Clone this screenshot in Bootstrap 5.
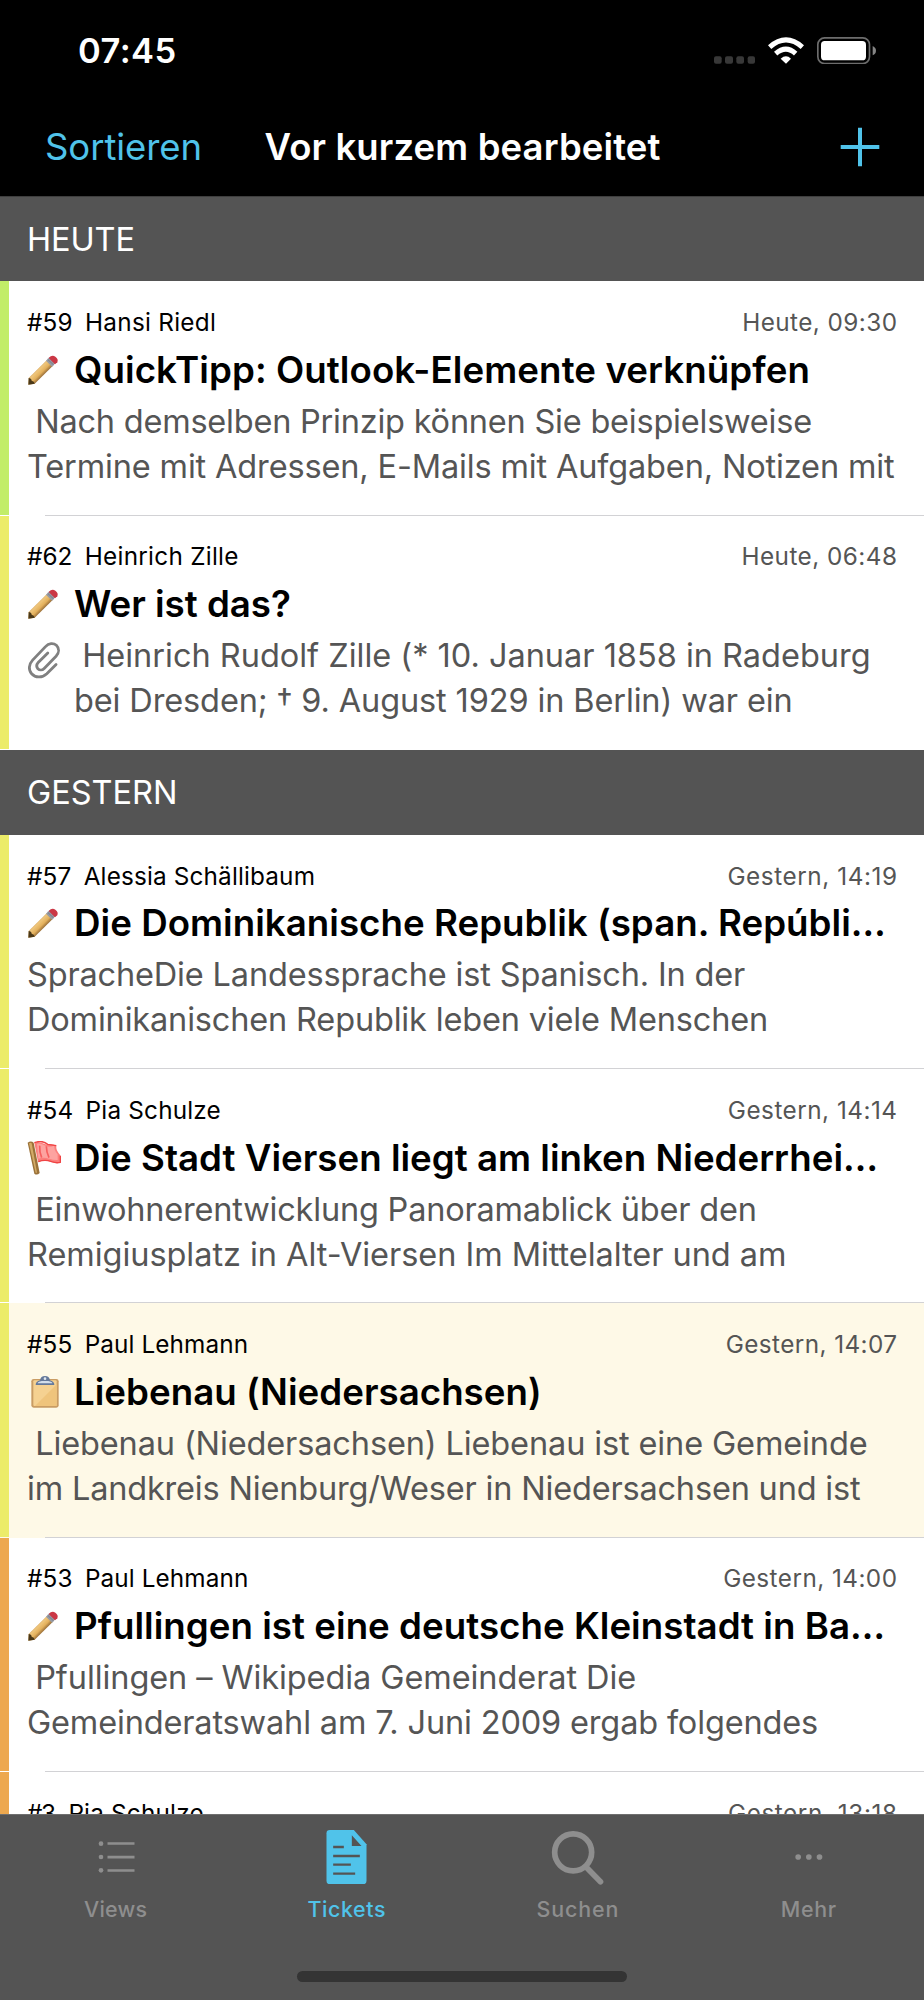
<!DOCTYPE html>
<html lang="de">
<head>
<meta charset="utf-8">
<meta name="viewport" content="width=device-width, initial-scale=1">
<title>Vor kurzem bearbeitet</title>
<link href="https://cdn.jsdelivr.net/npm/bootstrap@5.3.0/dist/css/bootstrap.min.css" rel="stylesheet">
<style>
  :root { --accent: #50c3ea; --bar: #545454; --muted: #8e8e8e; }
  body { font-family: Inter, "Liberation Sans", sans-serif; background: #fff; color: #000; }
  .phone { width: 924px; height: 2000px; }
  .phone > header, .phone > footer { flex: none; }
  .ticket-list { flex: 1 1 0; min-height: 0; }
  [data-w] { white-space: pre; display: inline-block; }
  .statusbar { height: 98px; padding: 26px 48px 0 78px; }
  .clock { font-size: 34.5px; line-height: 50px; font-weight: 600; }
  .statusicons { width: 162px; height: 27.4px; margin-top: 10.7px; }
  .topnav { height: 99px; padding: 0 44px 0 45px; border-bottom: 1px solid #3e3e3e; }
  .topnav .sort { font-size: 36.5px; line-height: 98px; color: var(--accent); }
  .topnav .heading { font-size: 36.5px; line-height: 98px; font-weight: 600; margin-left: 62.5px; }
  .group-head { height: 85px; background: var(--bar); color: #fff; font-size: 32.5px; line-height: 85px; padding-left: 27px; }
  section:first-child .group-head { height: 84.3px; }
  .ticket { height: 234.3px; position: relative; }
  .stripe { width: 9px; margin-bottom: 1px; }
  .ticket::after { content: ""; position: absolute; left: 45px; right: 0; bottom: 0; height: 1px; background: #d2d2d5; }
  .ticket.final::after { display: none; }
  .green { background: #c2ed68; } .yellow { background: #ecec69; } .orange { background: #eda84f; }
  .unread { background: #fef9e7; }
  .content { padding: 25.7px 27px 0 18px; min-width: 0; }
  .meta { font-size: 24.3px; line-height: 30px; }
  .meta .who { margin-left: 12.4px; }
  .when, .desc { color: #555; }
  .subject { font-size: 36.7px; line-height: 60px; font-weight: 600; margin-top: 2.8px; }
  .glyph { width: 47px; flex: none; }
  .glyph svg { display: block; }
  .desc { font-size: 32.5px; line-height: 45px; margin-top: -1.1px; }
  .indent { padding-left: 8.2px; }
  .tabbar { height: 185.7px; background: var(--bar); border-top: 1px solid #6f6f6f; padding-top: 9.7px; }
  .tab { color: var(--muted); font-size: 21.4px; font-weight: 500; }
  .tab.active { color: var(--accent); }
  .tab svg { width: 80px; height: 60px; display: block; }
  .tab span { line-height: 28px; margin-top: 9.6px; }
  .home { width: 330px; height: 11px; border-radius: 6px; background: #343434; margin-bottom: 18px; }
</style>
</head>
<body>
<svg width="0" height="0" class="position-absolute">
  <defs>
    <linearGradient id="wood" gradientUnits="userSpaceOnUse" x1="29" y1="41" x2="53" y2="65"><stop offset="0" stop-color="#c08a45"/><stop offset=".25" stop-color="#efc67c"/><stop offset=".6" stop-color="#e3b05c"/><stop offset="1" stop-color="#7d552a"/></linearGradient>
    <symbol id="pencil" viewBox="0 0 96 96">
      <path d="M4 92 5 72 59 19 77 36 23 89Z" fill="url(#wood)"/>
      <path d="M4 92 5 72q8 0 9 8 8 1 9 9Z" fill="#4a3818"/>
      <path d="M57 20 67 10 85 28 75 38Z" fill="#969aa4"/>
      <path d="M62 16 80 33" stroke="#74777f" stroke-width="2.500"/>
      <path d="M65 12q10-11 20-4t6 17l-7 6Z" fill="#cb3745"/>
    </symbol>
    <symbol id="flag" viewBox="0 0 102 102">
      <path d="M22 5C40-3 48 12 68 10q12-2 20 5-2 12 12 28v22q-14 4-30-3-18-6-37 1Z" fill="#fb7f7c"/>
      <path d="M30 8q10-3 22 5t30 1q-1 14 10 26v17q-12 1-25-4-17-6-33 0Z" fill="#fda3a0"/>
      <path d="M38 14q-1 18 6 36M58 16q0 16 8 34" stroke="#f65f5f" stroke-width="5" fill="none"/>
      <path d="M22 5q24-9 40 5l26 4M34 62q20-8 40 0 14 5 26 2V44" stroke="#ef4344" stroke-width="4" fill="none"/>
      <path d="M2 5q10-7 18 0L38 96q-8 8-16 2Z" fill="#9b7239"/>
      <path d="M6 7q4-4 8 0l16 88h-4Z" fill="#d3ab68"/>
    </symbol>
    <symbol id="clipboard" viewBox="0 0 84 96">
      <rect x="1" y="9" width="82" height="86" rx="7" fill="#c99c63"/>
      <rect x="7" y="13" width="70" height="77" rx="3" fill="#f5d191"/>
      <path d="M77 25v65H12Z" fill="#efc47c"/>
      <path d="M14 27q0-11 13-14Q29 0 42 0t15 13q13 3 13 14Z" fill="#65799a"/>
      <path d="M20 22q0-5 12-7h20q12 2 12 7Z" fill="#d3deeb"/>
      <circle cx="42" cy="8" r="4" fill="#dfe7ef"/>
    </symbol>
    <symbol id="clip" viewBox="83 392 103 115">
      <path d="M171 463 143 491C128 505 108 503 97 491 87 480 88 463 100 450L139 409C149 398 163 397 172 405 181 414 181 427 171 438L135 475C129 481 121 481 116 476 111 470 112 463 117 457L146 428" fill="none" stroke="#808080" stroke-width="8.500" stroke-linecap="round"/>
    </symbol>
  </defs>
</svg>

<div class="phone d-flex flex-column overflow-hidden">
  <header class="bg-black text-white">
    <div class="statusbar d-flex justify-content-between align-items-start">
      <span class="clock" data-w="95.500">07:45</span>
      <svg class="statusicons" viewBox="42 50 486 82">
        <g fill="#383838"><rect x="42" y="108" width="23" height="22" rx="6"/><rect x="75" y="108" width="24" height="22" rx="6"/><rect x="109" y="108" width="23" height="22" rx="6"/><rect x="143" y="108" width="22" height="22" rx="6"/></g>
        <g fill="none" stroke="#fff" stroke-width="15"><path d="M209 80Q258 37 307 80"/><path d="M227 100Q258 73 287 100"/></g>
        <path d="M242 115q16-14 31 0l-15 15Z" fill="#fff"/>
        <rect x="353.500" y="52.500" width="155" height="77" rx="20" fill="none" stroke="#6d6d6d" stroke-width="5"/>
        <rect x="363" y="62" width="135" height="58" rx="11" fill="#fff"/>
        <path d="M518 77q10 5 10 14t-10 14Z" fill="#858585"/>
      </svg>
    </div>
    <nav class="topnav d-flex align-items-center">
      <span class="sort" data-w="152.500">Sortieren</span>
      <span class="heading" data-w="396">Vor kurzem bearbeitet</span>
      <svg class="ms-auto" width="40" height="40" viewBox="0 0 40 40" stroke="#50c3ea" stroke-width="4"><path d="M20 .7v38.600M.7 20h38.600"/></svg>
    </nav>
  </header>

  <main class="ticket-list overflow-hidden">
    <section>
      <div class="group-head"><span data-w="104.500">HEUTE</span></div>
      <article class="ticket d-flex">
        <div class="stripe green"></div>
        <div class="content flex-fill">
          <div class="meta d-flex"><span data-w="44.500">#59</span><span class="who" data-w="127">Hansi Riedl</span><span class="when ms-auto" data-w="151.500">Heute, 09:30</span></div>
          <div class="subject d-flex align-items-center"><span class="glyph"><svg width="32" height="32"><use href="#pencil"/></svg></span><span data-w="732.500">QuickTipp: Outlook-Elemente verknüpfen</span></div>
          <div class="desc"><div class="indent"><span data-w="774">Nach demselben Prinzip können Sie beispielsweise</span></div><div><span data-w="866">Termine mit Adressen, E-Mails mit Aufgaben, Notizen mit</span></div></div>
        </div>
      </article>
      <article class="ticket final d-flex">
        <div class="stripe yellow"></div>
        <div class="content flex-fill">
          <div class="meta d-flex"><span data-w="44.500">#62</span><span class="who" data-w="150.500">Heinrich Zille</span><span class="when ms-auto" data-w="152.500">Heute, 06:48</span></div>
          <div class="subject d-flex align-items-center"><span class="glyph"><svg width="32" height="32"><use href="#pencil"/></svg></span><span data-w="216">Wer ist das?</span></div>
          <div class="desc d-flex"><span class="glyph pt-2"><svg width="34" height="38"><use href="#clip"/></svg></span><div><div class="indent"><span data-w="784.500">Heinrich Rudolf Zille (* 10. Januar 1858 in Radeburg</span></div><div><span data-w="714.500">bei Dresden; † 9. August 1929 in Berlin) war ein</span></div></div></div>
        </div>
      </article>
    </section>
    <section>
      <div class="group-head"><span data-w="147">GESTERN</span></div>
      <article class="ticket d-flex">
        <div class="stripe yellow"></div>
        <div class="content flex-fill">
          <div class="meta d-flex"><span data-w="43.500">#57</span><span class="who" data-w="230">Alessia Schällibaum</span><span class="when ms-auto" data-w="167.500">Gestern, 14:19</span></div>
          <div class="subject d-flex align-items-center"><span class="glyph"><svg width="32" height="32"><use href="#pencil"/></svg></span><span data-w="808.500">Die Dominikanische Republik (span. Repúbli…</span></div>
          <div class="desc"><div><span data-w="717">SpracheDie Landessprache ist Spanisch. In der</span></div><div><span data-w="737">Dominikanischen Republik leben viele Menschen</span></div></div>
        </div>
      </article>
      <article class="ticket d-flex">
        <div class="stripe yellow"></div>
        <div class="content flex-fill">
          <div class="meta d-flex"><span data-w="45.500">#54</span><span class="who" data-w="132">Pia Schulze</span><span class="when ms-auto" data-w="167.500">Gestern, 14:14</span></div>
          <div class="subject d-flex align-items-center"><span class="glyph"><svg width="34" height="34"><use href="#flag"/></svg></span><span data-w="800">Die Stadt Viersen liegt am linken Niederrhei…</span></div>
          <div class="desc"><div class="indent"><span data-w="717.500">Einwohnerentwicklung Panoramablick über den</span></div><div><span data-w="755">Remigiusplatz in Alt-Viersen Im Mittelalter und am</span></div></div>
        </div>
      </article>
      <article class="ticket unread d-flex">
        <div class="stripe yellow"></div>
        <div class="content flex-fill">
          <div class="meta d-flex"><span data-w="44.500">#55</span><span class="who" data-w="160">Paul Lehmann</span><span class="when ms-auto" data-w="169.500">Gestern, 14:07</span></div>
          <div class="subject d-flex align-items-center"><span class="glyph ps-1"><svg width="28" height="32"><use href="#clipboard"/></svg></span><span data-w="462.500">Liebenau (Niedersachsen)</span></div>
          <div class="desc"><div class="indent"><span data-w="829.500">Liebenau (Niedersachsen) Liebenau ist eine Gemeinde</span></div><div><span data-w="832">im Landkreis Nienburg/Weser in Niedersachsen und ist</span></div></div>
        </div>
      </article>
      <article class="ticket d-flex">
        <div class="stripe orange"></div>
        <div class="content flex-fill">
          <div class="meta d-flex"><span data-w="44.500">#53</span><span class="who" data-w="160">Paul Lehmann</span><span class="when ms-auto" data-w="171.500">Gestern, 14:00</span></div>
          <div class="subject d-flex align-items-center"><span class="glyph"><svg width="32" height="32"><use href="#pencil"/></svg></span><span data-w="807">Pfullingen ist eine deutsche Kleinstadt in Ba…</span></div>
          <div class="desc"><div class="indent"><span data-w="598">Pfullingen – Wikipedia Gemeinderat Die</span></div><div><span data-w="789">Gemeinderatswahl am 7. Juni 2009 ergab folgendes</span></div></div>
        </div>
      </article>
      <article class="ticket final d-flex">
        <div class="stripe orange"></div>
        <div class="content flex-fill">
          <div class="meta d-flex"><span data-w="28">#3</span><span class="who" data-w="132">Pia Schulze</span><span class="when ms-auto" data-w="167">Gestern, 13:18</span></div>
        </div>
      </article>
    </section>
  </main>

  <footer class="tabbar d-flex flex-column justify-content-between">
    <div class="row g-0">
      <div class="tab col-3 d-flex flex-column align-items-center">
        <svg viewBox="226.500 225 240 180" fill="currentColor"><circle cx="301.500" cy="281" r="7"/><circle cx="301.500" cy="321" r="7"/><circle cx="301.500" cy="361" r="7"/><path d="M321 276.500h81v8h-81zM321 317.500h81v8h-81zM321 357.500h81v8h-81z"/></svg>
        <span data-w="62.500">Views</span>
      </div>
      <div class="tab active col-3 d-flex flex-column align-items-center">
        <svg viewBox="919.500 225 240 180"><path d="M988 240h72l38 43v109q0 10-10 10H988q-10 0-10-10V250q0-10 10-10Z" fill="currentColor"/><path d="M1054 256v32h29ZM998 287.500h32v7h-32zM998 314.500h80v7h-80zM998 340.500h53v7h-53zM998 367.500h66v7h-66z" fill="#545454"/></svg>
        <span data-w="77.500">Tickets</span>
      </div>
      <div class="tab col-3 d-flex flex-column align-items-center">
        <svg viewBox="226.500 225 240 180" fill="none" stroke="currentColor"><circle cx="332" cy="307" r="55.500" stroke-width="17"/><path d="m370 350 44 45" stroke-width="17" stroke-linecap="round"/></svg>
        <span data-w="80">Suchen</span>
      </div>
      <div class="tab col-3 d-flex flex-column align-items-center">
        <svg viewBox="919.500 225 240 180" fill="currentColor"><circle cx="1007" cy="321" r="8.500"/><circle cx="1039" cy="321" r="8.500"/><circle cx="1071" cy="321" r="8.500"/></svg>
        <span data-w="54">Mehr</span>
      </div>
    </div>
    <div class="home mx-auto"></div>
  </footer>
</div>
<script src="https://cdn.jsdelivr.net/npm/bootstrap@5.3.0/dist/js/bootstrap.bundle.min.js"></script>
<script>
  // Track each label so that its ink is data-w pixels wide.
  const ctx = document.createElement('canvas').getContext('2d');
  document.querySelectorAll('[data-w]').forEach(el => {
    const cs = getComputedStyle(el), text = el.textContent;
    ctx.font = `${cs.fontWeight} ${cs.fontSize} ${cs.fontFamily}`;
    const m = ctx.measureText(text);
    const ink = m.actualBoundingBoxRight + m.actualBoundingBoxLeft;
    const ls = (el.dataset.w - ink) / (text.length - 1);
    el.style.letterSpacing = ls.toFixed(3) + 'px';
    el.style.marginRight = (-ls).toFixed(3) + 'px';
  });
</script>
</body>
</html>
